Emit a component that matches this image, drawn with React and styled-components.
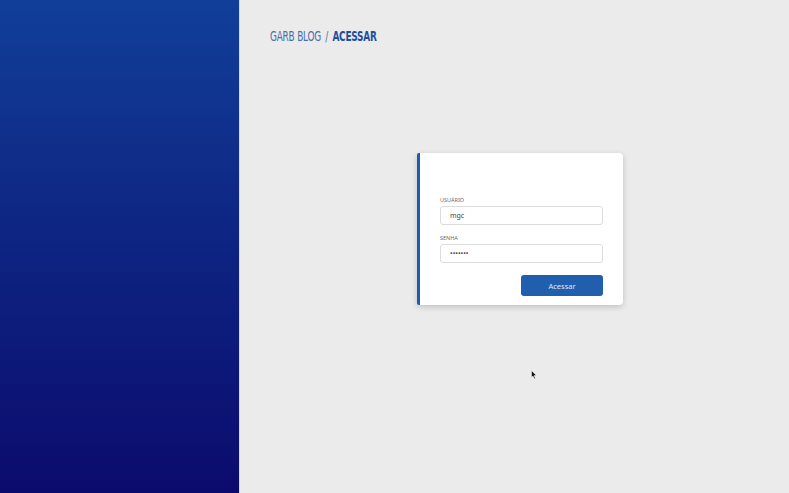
import React from 'react';
import styled, { createGlobalStyle } from 'styled-components';

const GlobalStyle = createGlobalStyle`
  html, body, #root {
    margin: 0;
    height: 100%;
  }
  body {
    font-family: "Noto Sans", "Open Sans", sans-serif;
    background: #ecebec;
    overflow: hidden;
  }
`;

const Page = styled.div`
  display: flex;
  height: 100vh;
  position: relative;
`;

const Side = styled.aside`
  width: 240px;
  flex-shrink: 0;
  background: linear-gradient(180deg, #113f99 0%, #0e2683 45%, #0b0b6d 100%);
  border-right: 1px solid #d6d7e6;
  box-sizing: border-box;
`;

const Main = styled.main`
  flex: 1;
  display: flex;
  flex-direction: column;
  padding: 28px 30px;
`;

const Crumbs = styled.div`
  display: flex;
  align-items: baseline;
  gap: 6px;
  font-family: "DejaVu Sans", sans-serif;
  font-stretch: condensed;
  font-size: 14px;
  line-height: 16px;
  letter-spacing: -0.3px;
  transform: scaleX(0.71);
  transform-origin: left center;
`;

const Crumb = styled.span`
  color: ${({ active }) => (active ? '#1d4f9c' : '#4a6fa8')};
  font-weight: ${({ active }) => (active ? 700 : 400)};
`;

const Stage = styled.div`
  flex: 1;
  display: flex;
  justify-content: center;
  align-items: flex-start;
  padding-top: 109px;
  padding-left: 11px;
`;

const Card = styled.form`
  width: 206px;
  box-sizing: border-box;
  background: #fff;
  border-left: 3px solid #1f5bb0;
  border-radius: 2px 4px 4px 2px;
  box-shadow: 0 2px 6px rgba(0, 0, 0, 0.18);
  padding: 44px 20px 9px 20px;
  display: flex;
  flex-direction: column;
`;

const Field = styled.label`
  display: flex;
  flex-direction: column;
  gap: 2px;
  margin-bottom: ${({ last }) => (last ? '12px' : '10px')};
`;

const Label = styled.span`
  font-size: 5.5px;
  line-height: 7px;
  color: #6a6a6a;
  text-transform: uppercase;
`;

const Input = styled.input`
  height: 19px;
  box-sizing: border-box;
  border: 1px solid #dcdcdc;
  border-radius: 3px;
  padding: 0 9px;
  font-family: "Noto Sans", sans-serif;
  font-size: 7px;
  color: #444;
  background: #fff;
  outline: none;
`;

const Actions = styled.div`
  display: flex;
  justify-content: flex-end;
`;

const Button = styled.button`
  width: 82px;
  height: 21px;
  border: none;
  border-radius: 3px;
  background: #1f5fae;
  color: #dfe8f5;
  font-family: "Noto Sans", sans-serif;
  font-size: 7.5px;
  cursor: pointer;
`;

const Pointer = styled.svg`
  position: absolute;
  left: 531px;
  top: 370px;
  width: 6px;
  height: 9px;
`;

export default function App() {
  return (
    <>
      <GlobalStyle />
      <Page>
        <Side />
        <Main>
          <Crumbs>
            <Crumb>GARB BLOG</Crumb>
            <Crumb>/</Crumb>
            <Crumb active>ACESSAR</Crumb>
          </Crumbs>
          <Stage>
            <Card onSubmit={(e) => e.preventDefault()}>
              <Field>
                <Label>Usuário</Label>
                <Input defaultValue="mgc" />
              </Field>
              <Field last>
                <Label>Senha</Label>
                <Input type="password" defaultValue="1234567" />
              </Field>
              <Actions>
                <Button type="submit">Acessar</Button>
              </Actions>
            </Card>
          </Stage>
        </Main>
        <Pointer viewBox="0 0 6 9">
          <path d="M0.5 0.5 L0.5 7.5 L2 6 L3.3 8.7 L4.3 8.2 L3.1 5.6 L5.3 5.6 Z" fill="#111" stroke="#fff" strokeWidth="0.5" />
        </Pointer>
      </Page>
    </>
  );
}
